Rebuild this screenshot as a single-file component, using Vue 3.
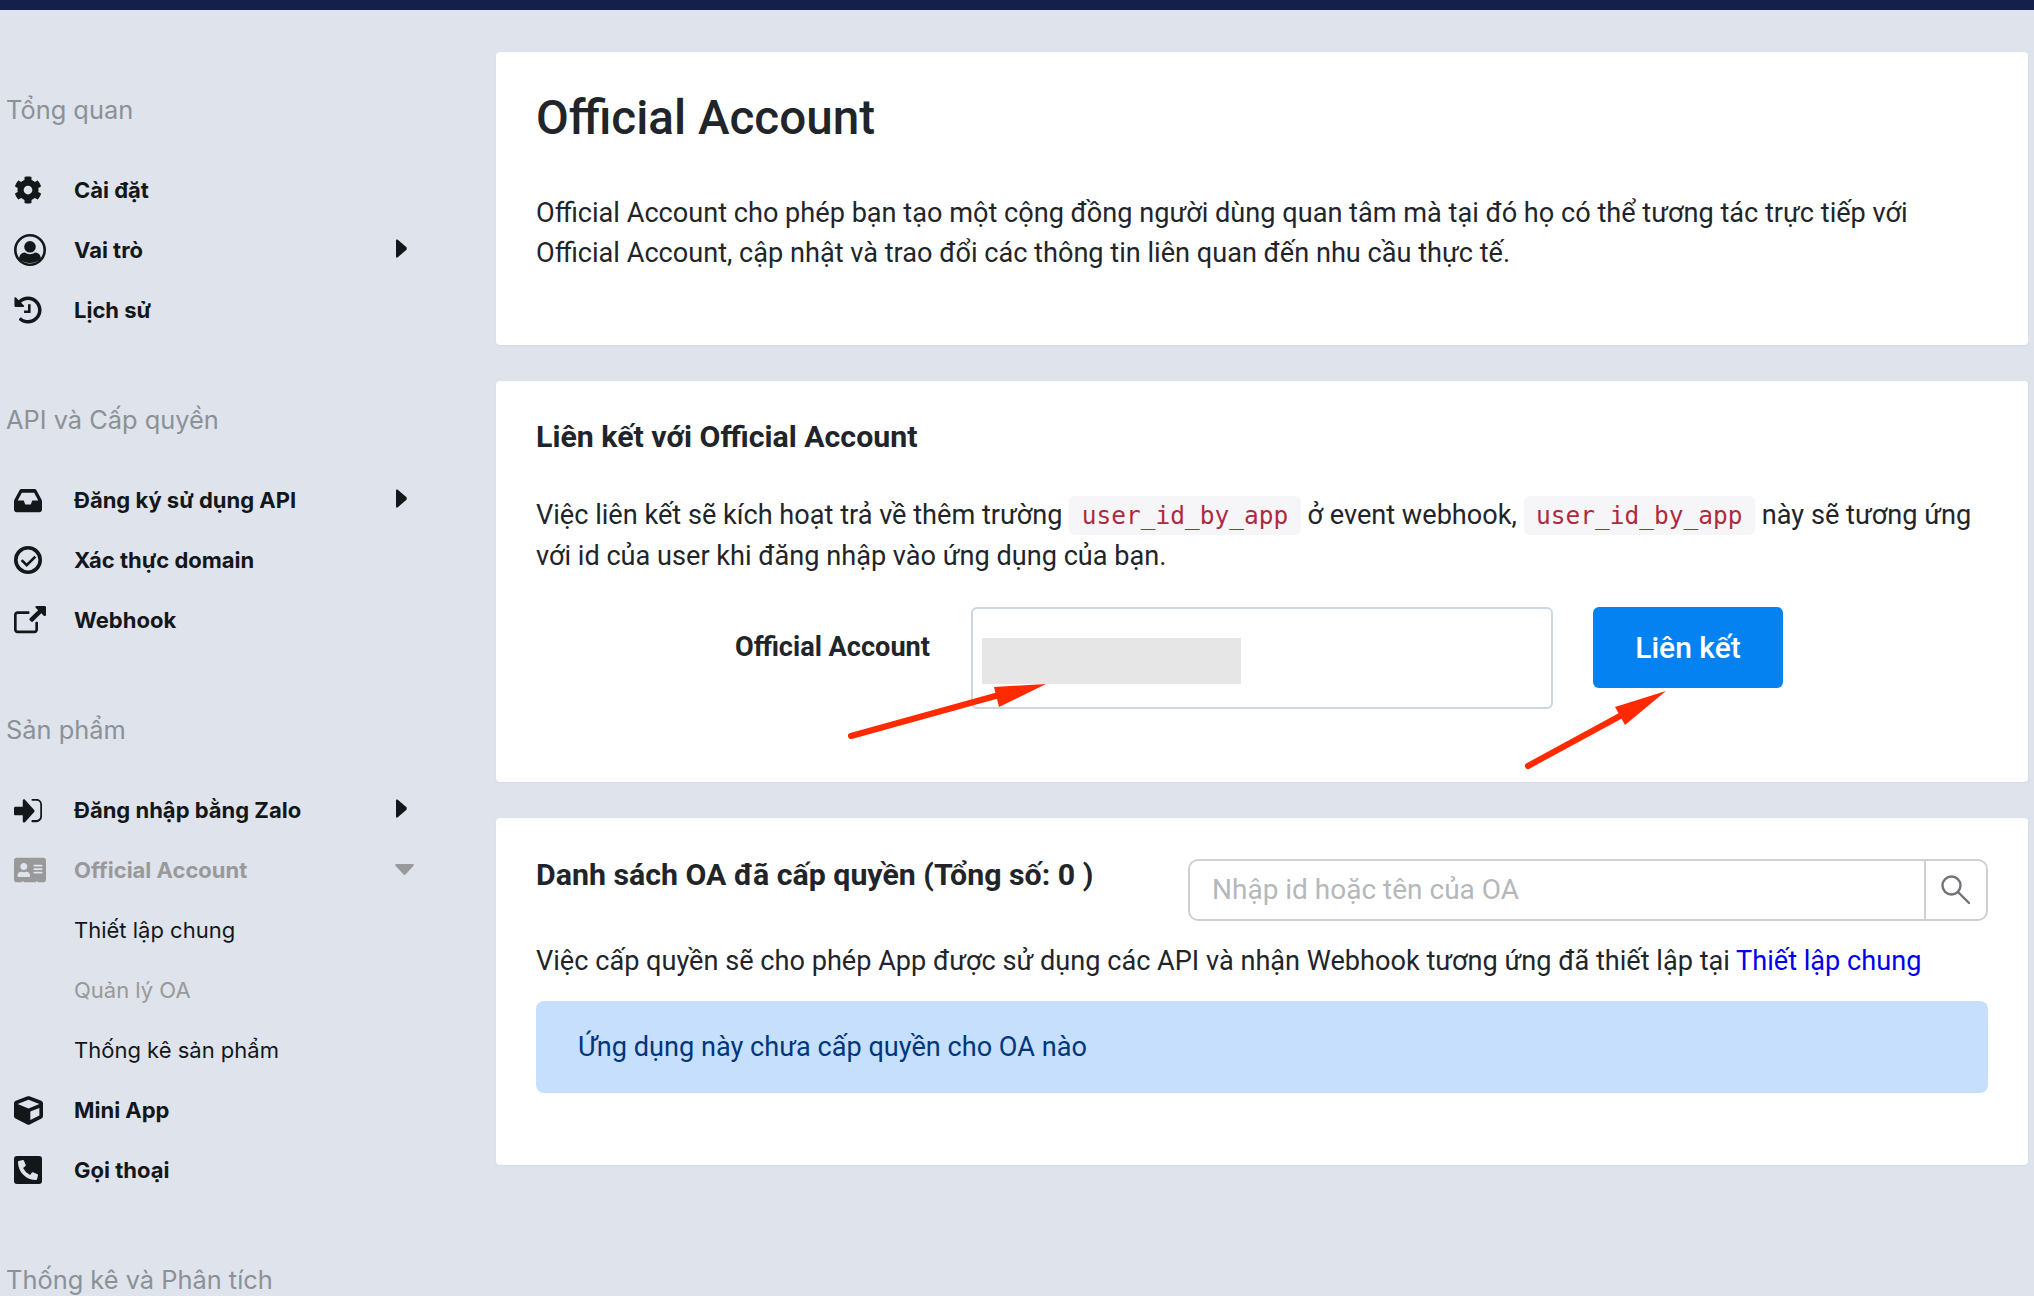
<script setup>
const icons = {
  cog: { w: 28, h: 28, vb: '0 0 512 512', d: 'M487.4 315.7l-42.6-24.6c4.3-23.2 4.3-47 0-70.2l42.6-24.6c4.9-2.8 7.1-8.6 5.5-14-11.1-35.6-30-67.8-54.7-94.6-3.8-4.1-10-5.1-14.8-2.3L380.8 110c-17.9-15.4-38.5-27.3-60.8-35.1V25.8c0-5.6-3.9-10.5-9.4-11.7-36.7-8.2-74.3-7.8-109.2 0-5.5 1.2-9.4 6.1-9.4 11.7V75c-22.2 7.9-42.8 19.8-60.8 35.1L88.7 85.5c-4.9-2.8-11-1.9-14.8 2.3-24.7 26.7-43.6 58.9-54.7 94.6-1.7 5.4.6 11.2 5.5 14L67.3 221c-4.3 23.2-4.3 47 0 70.2l-42.6 24.6c-4.9 2.8-7.1 8.6-5.5 14 11.1 35.6 30 67.8 54.7 94.6 3.8 4.1 10 5.1 14.8 2.3l42.6-24.6c17.9 15.4 38.5 27.3 60.8 35.1v49.2c0 5.6 3.9 10.5 9.4 11.7 36.7 8.2 74.3 7.8 109.2 0 5.5-1.2 9.4-6.1 9.4-11.7v-49.2c22.2-7.9 42.8-19.8 60.8-35.1l42.6 24.6c4.9 2.8 11 1.9 14.8-2.3 24.7-26.7 43.6-58.9 54.7-94.6 1.5-5.5-.7-11.3-5.6-14.1zM256 336c-44.1 0-80-35.9-80-80s35.9-80 80-80 80 35.9 80 80-35.9 80-80 80z' },
  user: { w: 32, h: 32, vb: '0 0 32 32', d: 'M16 0a16 16 0 1 1 0 32a16 16 0 1 1 0-32zM16 2.6a13.4 13.4 0 1 0 0 26.8a13.4 13.4 0 1 0 0-26.8zM16 7a5.8 5.8 0 1 1 0 11.6a5.8 5.8 0 1 1 0-11.6zM11 18.6c1.5 1 3.2 1.6 5 1.6s3.5-.6 5-1.6c3.4 0 5.6 2.6 5.8 5.4c-2.6 3.2-6.4 5-10.8 5s-8.2-1.8-10.8-5c.2-2.8 2.4-5.4 5.8-5.4z' },
  history: { w: 28, h: 28, vb: '0 0 512 512', d: 'M504 255.531c.253 136.64-111.18 248.372-247.82 248.468-59.015.042-113.223-20.53-155.822-54.911-11.077-8.94-11.905-25.541-1.839-35.607l11.267-11.267c8.609-8.609 22.353-9.551 31.891-1.984C173.062 425.135 212.781 440 256 440c101.705 0 184-82.311 184-184 0-101.705-82.311-184-184-184-48.814 0-93.149 18.969-126.068 49.932l50.754 50.754c10.08 10.08 2.941 27.314-11.313 27.314H24c-8.837 0-16-7.163-16-16V38.627c0-14.254 17.234-21.393 27.314-11.314l49.372 49.372C129.209 34.136 189.552 8 256 8c136.81 0 247.747 110.78 248 247.531zM304 152h-40c-6 0-8 3-8 8v104h-64c-6 0-8 3-8 8v32c0 5 3 8 8 8h104c6 0 8-3 8-8V160c0-5-3-8-8-8z' },
  inbox: { w: 28, h: 31, vb: '0 0 576 512', d: 'M567.938 243.908L462.25 85.374A48.003 48.003 0 0 0 422.311 64H153.689a48 48 0 0 0-39.938 21.374L8.062 243.908A47.994 47.994 0 0 0 0 270.533V400c0 26.51 21.49 48 48 48h480c26.51 0 48-21.49 48-48V270.533a47.994 47.994 0 0 0-8.062-26.625zM162.252 128h251.497l85.333 128H376l-32 64H232l-32-64H76.918l85.334-128z' },
  check: { w: 28, h: 28, vb: '0 0 28 28', d: 'M14 0a14 14 0 1 1 0 28a14 14 0 1 1 0-28zM14 3.6a10.4 10.4 0 1 0 0 20.8a10.4 10.4 0 1 0 0-20.8zM20.4 9.7l1.9 1.9l-9.6 9.5l-6-6l1.9-1.9l4.1 4.1z' },
  link: { w: 32, h: 28, vb: '0 0 576 512', d: 'M64 96h200c9 0 16 7 16 16v16c0 9-7 16-16 16H64c-9 0-16 7-16 16v272c0 9 7 16 16 16h304c9 0 16-7 16-16V304c0-9 7-16 16-16h16c9 0 16 7 16 16v128c0 35-29 64-64 64H64c-35 0-64-29-64-64V160c0-35 29-64 64-64zM576 24v136c0 21-26 32-41 17l-43-43-150 150c-9 9-25 9-34 0l-24-24c-9-9-9-25 0-34l150-150-43-43c-15-15-4-33 17-33h144c13 0 24 11 24 24z' },
  signin: { w: 28, h: 31, vb: '0 0 512 512', d: 'M24 192H160v-96c0-21.5 26-32 41-17l168 168c9.3 9.4 9.3 24.6 0 34L201 449c-15 15-41 4.5-41-17v-96H24c-13.3 0-24-10.7-24-24v-96c0-13.3 10.7-24 24-24zM332 64h84c53 0 96 43 96 96v192c0 53-43 96-96 96h-84c-6.6 0-12-5.4-12-12v-12c0-6.6 5.4-12 12-12h84c39 0 64-25 64-64V160c0-39-25-64-64-64h-84c-6.6 0-12-5.4-12-12V76c0-6.6 5.4-12 12-12z' },
  card: { w: 32, h: 28, vb: '0 0 576 512', d: 'M528 32H48C21.5 32 0 53.5 0 80v352c0 26.5 21.5 48 48 48h98v-20h24v20h228v-20h24v20h106c26.5 0 48-21.5 48-48V80c0-26.5-21.5-48-48-48zm-352 96c35.3 0 64 28.7 64 64s-28.7 64-64 64-64-28.7-64-64 28.7-64 64-64zm112 236.8c0 10.6-10 19.2-22.4 19.2H86.4C74 384 64 375.4 64 364.8v-19.2c0-31.8 30.1-57.6 67.2-57.6h5c12.3 5.1 25.7 8 39.8 8s27.6-2.9 39.8-8h5c37.1 0 67.2 25.8 67.2 57.6v19.2zM512 312c0 4.4-3.6 8-8 8H360c-4.4 0-8-3.6-8-8v-16c0-4.4 3.6-8 8-8h144c4.4 0 8 3.6 8 8v16zm0-64c0 4.4-3.6 8-8 8H360c-4.4 0-8-3.6-8-8v-16c0-4.4 3.6-8 8-8h144c4.4 0 8 3.6 8 8v16zm0-64c0 4.4-3.6 8-8 8H360c-4.4 0-8-3.6-8-8v-16c0-4.4 3.6-8 8-8h144c4.4 0 8 3.6 8 8v16z' },
  cube: { w: 29, h: 29, vb: '0 0 512 512', d: 'M239.1 6.3l-208 78c-18.7 7-31.1 25-31.1 45v225.1c0 18.2 10.3 34.8 26.5 42.9l208 104c13.5 6.8 29.4 6.8 42.9 0l208-104c16.3-8.1 26.5-24.8 26.5-42.9V129.3c0-20-12.4-37.9-31.1-44.9l-208-78C262 2.2 250 2.2 239.1 6.3zM256 68.4l192 72v1.1l-192 78-192-78v-1.1l192-72zm32 356V275.5l160-65v133.9l-160 80z' },
  phone: { w: 28, h: 32, vb: '0 0 448 512', d: 'M400 32H48A48 48 0 0 0 0 80v352a48 48 0 0 0 48 48h352a48 48 0 0 0 48-48V80a48 48 0 0 0-48-48zm-16.39 307.37l-15 65A15 15 0 0 1 354 416C194 416 64 286.29 64 126a15.7 15.7 0 0 1 11.63-14.61l65-15A18.23 18.23 0 0 1 144 96a16.27 16.27 0 0 1 13.79 9.09l30 70A17.9 17.9 0 0 1 189 181a17 17 0 0 1-5.5 11.61l-37.89 31a231.91 231.91 0 0 0 110.78 110.78l31-37.89A17 17 0 0 1 299 291a17.85 17.85 0 0 1 5.91 1.21l70 30A16.25 16.25 0 0 1 384 336a17.41 17.41 0 0 1-.39 3.37z' }
}

const sections = [
  { title: 'Tổng quan', items: [
    { label: 'Cài đặt', icon: 'cog' },
    { label: 'Vai trò', icon: 'user', caret: 'right' },
    { label: 'Lịch sử', icon: 'history' }
  ] },
  { title: 'API và Cấp quyền', items: [
    { label: 'Đăng ký sử dụng API', icon: 'inbox', caret: 'right' },
    { label: 'Xác thực domain', icon: 'check' },
    { label: 'Webhook', icon: 'link' }
  ] },
  { title: 'Sản phẩm', items: [
    { label: 'Đăng nhập bằng Zalo', icon: 'signin', caret: 'right' },
    { label: 'Official Account', icon: 'card', caret: 'down', muted: true },
    { label: 'Thiết lập chung', sub: true },
    { label: 'Quản lý OA', sub: true, muted: true },
    { label: 'Thống kê sản phẩm', sub: true },
    { label: 'Mini App', icon: 'cube' },
    { label: 'Gọi thoại', icon: 'phone' }
  ] },
  { title: 'Thống kê và Phân tích', items: [] }
]
</script>

<template>
  <div class="page">
    <div class="topbar"></div>
    <div class="layout">
      <aside class="sidebar">
        <section v-for="s in sections" :key="s.title" class="group">
          <h4 class="group-title">{{ s.title }}</h4>
          <div
            v-for="it in s.items"
            :key="it.label"
            class="item"
            :class="{ sub: it.sub, muted: it.muted }"
          >
            <span class="icon-slot">
              <svg
                v-if="it.icon"
                class="icon"
                :width="icons[it.icon].w"
                :height="icons[it.icon].h"
                :viewBox="icons[it.icon].vb"
                preserveAspectRatio="none"
                fill="currentColor"
                fill-rule="evenodd"
              >
                <path :d="icons[it.icon].d" />
              </svg>
            </span>
            <span class="label">{{ it.label }}</span>
            <svg v-if="it.caret === 'right'" class="caret-right" viewBox="0 0 11 19" fill="currentColor">
              <path d="M1.5 0.5 L10.5 8.2 Q11 9.5 10.5 10.8 L1.5 18.5 Q0 19 0 17.5 V1.5 Q0 0 1.5 0.5Z" />
            </svg>
            <svg v-if="it.caret === 'down'" class="caret-down" viewBox="0 0 19 11" fill="currentColor">
              <path d="M1 0 H18 Q19.3 .4 18.5 1.7 L10.5 10.4 Q9.5 11.2 8.5 10.4 L.5 1.7 Q-.3 .4 1 0Z" />
            </svg>
          </div>
        </section>
      </aside>

      <main class="main">
        <section class="card intro">
          <h1>Official Account</h1>
          <p>Official Account cho phép bạn tạo một cộng đồng người dùng quan tâm mà tại đó họ có thể tương tác trực tiếp với Official Account, cập nhật và trao đổi các thông tin liên quan đến nhu cầu thực tế.</p>
        </section>

        <section class="card link-card">
          <h3>Liên kết với Official Account</h3>
          <p>Việc liên kết sẽ kích hoạt trả về thêm trường <code>user_id_by_app</code> ở event webhook, <code>user_id_by_app</code> này sẽ tương ứng với id của user khi đăng nhập vào ứng dụng của bạn.</p>
          <div class="form-row">
            <label>Official Account</label>
            <div class="select-box"><div class="redacted"></div></div>
            <button class="primary">Liên kết</button>
          </div>
          <svg class="arrows" viewBox="0 0 1532 401" fill="#ff2a00" aria-hidden="true">
            <path d="M355 355 L503 314" stroke="#ff2a00" stroke-width="6" stroke-linecap="round" />
            <path d="M550 303 L498 306 L503 326Z" />
            <path d="M1032 385 L1124 335" stroke="#ff2a00" stroke-width="6" stroke-linecap="round" />
            <path d="M1170 310 L1119 326 L1129 344Z" />
          </svg>
        </section>

        <section class="card list-card">
          <div class="list-head">
            <h3>Danh sách OA đã cấp quyền (Tổng số: 0 )</h3>
            <div class="search">
              <span class="placeholder">Nhập id hoặc tên của OA</span>
              <span class="search-btn">
                <svg viewBox="0 0 30 30" fill="none" stroke="#6f7479" stroke-width="2.4" stroke-linecap="round">
                  <circle cx="10.5" cy="10.5" r="9" />
                  <path d="M17 17 L28 28" />
                </svg>
              </span>
            </div>
          </div>
          <p>Việc cấp quyền sẽ cho phép App được sử dụng các API và nhận Webhook tương ứng đã thiết lập tại <a>Thiết lập chung</a></p>
          <div class="alert">Ứng dụng này chưa cấp quyền cho OA nào</div>
        </section>
      </main>
    </div>
  </div>
</template>

<style>
html, body { margin: 0; height: 100%; overflow: hidden; background: #dee3ec; }
</style>

<style scoped>
.page { height: 1296px; overflow: hidden; background: #dee3ec; }
.topbar { height: 10px; background: #141f4b; }
.layout { display: flex; align-items: flex-start; }

.sidebar { width: 496px; flex: none; box-sizing: border-box; padding: 80px 0 0 6px; font-family: Inter, "Noto Sans", sans-serif; }
.group { margin-bottom: 60px; }
.group-title { margin: 0 0 30px; font-size: 25.4px; line-height: 40px; font-weight: 400; color: #8c9196; }
.item { height: 60px; display: flex; align-items: center; color: #14171a; font-size: 22px; font-weight: 700; position: relative; }
.item.sub { font-weight: 400; }
.item.muted { color: #999; }
.icon-slot { width: 68px; flex: none; display: flex; align-items: center; padding-left: 8px; box-sizing: border-box; }
.icon { display: block; }
.caret-right { position: absolute; left: 390px; top: 19px; width: 11px; height: 19px; }
.caret-down { position: absolute; left: 389px; top: 24px; width: 19px; height: 11px; }

.main { width: 1532px; flex: none; padding-top: 42px; font-family: Roboto, "Noto Sans", sans-serif; color: #212529; }
.card { position: relative; box-sizing: border-box; background: #fff; border-radius: 4px; padding: 0 40px; margin-bottom: 36px; box-shadow: 0 1px 2px #d2dbe6; font-size: 27.14px; line-height: 40px; }
.card p { margin: 0; }
.intro { height: 293px; padding-top: 37px; }
h1 { margin: 0 0 46px; font-size: 47.6px; line-height: 58px; font-weight: 500; }
h3 { margin: 0; font-size: 30.3px; line-height: 40px; font-weight: 700; }

.link-card { height: 401px; padding-top: 36px; }
.link-card h3 { margin-bottom: 38px; }
code { font-family: "DejaVu Sans Mono", monospace; font-size: 24.5px; color: #b02a3f; background: #f6f6f8; border-radius: 6px; padding: 5px 12.5px; }
.form-row { display: flex; align-items: flex-start; margin-top: 31px; }
label { width: 394px; text-align: right; font-weight: 700; line-height: 80px; flex: none; }
.select-box { width: 582px; height: 102px; margin-left: 41px; box-sizing: border-box; border: 2px solid #ced6e0; border-radius: 6px; padding: 29px 0 0 9px; flex: none; }
.redacted { width: 259px; height: 46px; background: #e6e6e6; }
.primary { width: 190px; height: 81px; margin-left: 40px; border: 0; border-radius: 6px; background: #0582f2; color: #fff; font: 500 30px Roboto, sans-serif; flex: none; }
.arrows { position: absolute; left: 0; top: 0; width: 1532px; height: 401px; pointer-events: none; }

.list-card { height: 347px; padding-top: 37px; }
.list-head { display: flex; justify-content: space-between; align-items: flex-start; }
.search { width: 800px; height: 62px; margin-top: 4px; box-sizing: border-box; border: 2px solid #d0d0d0; border-radius: 10px; display: flex; align-items: center; justify-content: space-between; }
.placeholder { padding-left: 22px; color: #b5b8ba; font-size: 28px; }
.search-btn { width: 62px; height: 100%; border-left: 2px solid #d0d0d0; box-sizing: border-box; display: flex; align-items: center; justify-content: center; }
.search-btn svg { width: 30px; height: 30px; }
.list-card p { margin-top: 20px; }
a { color: #0000ee; }
.alert { margin-top: 20px; height: 92px; line-height: 92px; padding-left: 42px; border-radius: 8px; background: #c5dffd; color: #00367c; }
</style>
